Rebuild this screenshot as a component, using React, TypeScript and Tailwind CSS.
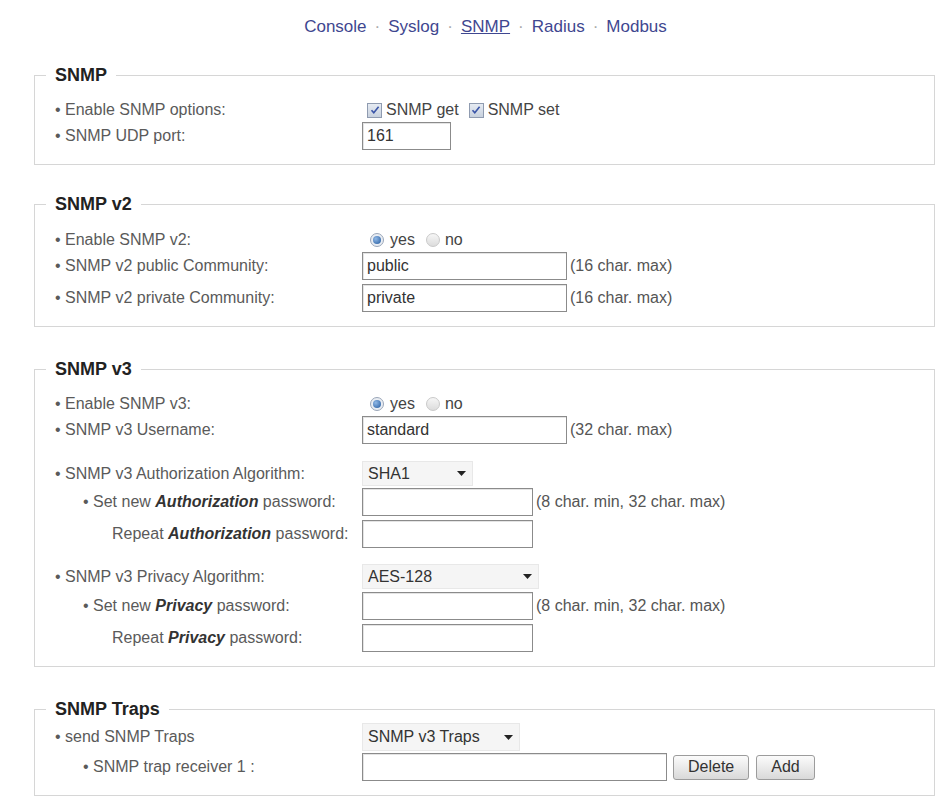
import React from "react";

const Bullet = ({ level = 1, children }: { level?: 1 | 2 | 3; children: React.ReactNode }) => {
  if (level === 3) return <span className="pl-[57px]">{children}</span>;
  return (
    <span className={level === 2 ? "pl-[28px]" : ""}>
      {"\u2022 "}
      {children}
    </span>
  );
};

const Row = ({
  label,
  children,
  className = "",
}: {
  label: React.ReactNode;
  children?: React.ReactNode;
  className?: string;
}) => (
  <div className={`grid grid-cols-[307px_1fr] items-center ${className}`}>
    <div className="whitespace-nowrap text-[16px] text-[#5a5a5a]">{label}</div>
    <div className="flex items-center">{children}</div>
  </div>
);

const Box = ({
  title,
  className = "",
  children,
}: {
  title: string;
  className?: string;
  children: React.ReactNode;
}) => (
  <fieldset className={`ml-[34px] mr-[2px] border border-[#d6d6d6] px-[20px] pb-[14px] ${className}`}>
    <legend className="ml-[-9px] px-[9px] text-[18px] font-bold leading-[24px] text-[#222]">{title}</legend>
    {children}
  </fieldset>
);

const TextInput = ({ value = "", width }: { value?: string; width: string }) => (
  <input
    readOnly
    defaultValue={value}
    className={`h-[28px] ${width} border border-[#8b8b8b] bg-white pl-[4px] text-[16px] text-[#333] shadow-[inset_1px_1px_0_#e4e4e4] outline-none`}
  />
);

const Hint = ({ children }: { children: React.ReactNode }) => (
  <span className="ml-[3px] whitespace-nowrap text-[16px] text-[#555]">{children}</span>
);

const Select = ({ value, width, height = "h-[25px]" }: { value: string; width: string; height?: string }) => (
  <div
    className={`flex ${height} ${width} items-center justify-between border border-[#e8e8e8] bg-[#f5f5f5] pl-[5px] pr-[6px] text-[16px] text-[#333]`}
  >
    <span>{value}</span>
    <svg width="9" height="5" viewBox="0 0 9 5">
      <path d="M0 0h9L4.5 5z" fill="#222" />
    </svg>
  </div>
);

const Check = () => (
  <span className="flex h-[15px] w-[15px] items-center justify-center border border-[#8f9bb0] bg-linear-to-b from-[#e6ebf2] to-[#c8d1de]">
    <svg width="10" height="10" viewBox="0 0 10 10">
      <path d="M1.5 5.2l2.3 2.6L8.6 1.8" fill="none" stroke="#3a55a8" strokeWidth="1.6" />
    </svg>
  </span>
);

const Radio = ({ on }: { on?: boolean }) =>
  on ? (
    <span className="flex h-[14px] w-[14px] items-center justify-center rounded-full border border-[#9aa6b8] bg-[#e9edf3]">
      <span className="h-[8px] w-[8px] rounded-full bg-radial-[at_35%_35%] from-[#8fb8e6] to-[#245a9e]" />
    </span>
  ) : (
    <span className="block h-[14px] w-[14px] rounded-full border border-[#c9c9c9] bg-linear-to-b from-[#f6f6f6] to-[#dcdcdc]" />
  );

const Button = ({ children }: { children: React.ReactNode }) => (
  <button className="h-[25px] rounded-[3px] border border-[#9c9c9c] bg-linear-to-b from-[#fbfbfb] to-[#d9d9d9] px-[14px] text-[16px] leading-[22px] text-[#333]">
    {children}
  </button>
);

const YesNo = () => (
  <div className="ml-[8px] flex items-center text-[16px] text-[#444]">
    <Radio on />
    <span className="ml-[6px]">yes</span>
    <span className="ml-[11px] block">
      <Radio />
    </span>
    <span className="ml-[5px]">no</span>
  </div>
);

const Dot = () => <span className="px-[8px] text-[#aaa]">·</span>;

export default function App() {
  return (
    <div className="min-h-[798px] bg-white font-['Liberation_Sans',Arial,sans-serif]">
      <nav className="ml-[34px] flex justify-center pt-[17px] text-[17px] leading-[20px] text-[#3f4790]">
        <span>Console</span>
        <Dot />
        <span>Syslog</span>
        <Dot />
        <span className="underline">SNMP</span>
        <Dot />
        <span>Radius</span>
        <Dot />
        <span>Modbus</span>
      </nav>

      <Box title="SNMP" className="mt-[26px] pt-[11px]">
        <Row label={<Bullet>Enable SNMP options:</Bullet>} className="h-[24px]">
          <div className="ml-[5px] flex items-center text-[16px] text-[#444]">
            <Check />
            <span className="ml-[4px]">SNMP get</span>
            <span className="ml-[10px] block">
              <Check />
            </span>
            <span className="ml-[4px]">SNMP set</span>
          </div>
        </Row>
        <Row label={<Bullet>SNMP UDP port:</Bullet>}>
          <TextInput value="161" width="w-[89px]" />
        </Row>
      </Box>

      <Box title="SNMP v2" className="mt-[27px] pt-[11px]">
        <Row label={<Bullet>Enable SNMP v2:</Bullet>} className="h-[25px]">
          <YesNo />
        </Row>
        <Row label={<Bullet>SNMP v2 public Community:</Bullet>}>
          <TextInput value="public" width="w-[205px]" />
          <Hint>(16 char. max)</Hint>
        </Row>
        <Row label={<Bullet>SNMP v2 private Community:</Bullet>} className="mt-[4px]">
          <TextInput value="private" width="w-[205px]" />
          <Hint>(16 char. max)</Hint>
        </Row>
      </Box>

      <Box title="SNMP v3" className="mt-[30px] pt-[11px] pb-[13px]">
        <Row label={<Bullet>Enable SNMP v3:</Bullet>} className="h-[20px]">
          <YesNo />
        </Row>
        <Row label={<Bullet>SNMP v3 Username:</Bullet>} className="mt-[4px]">
          <TextInput value="standard" width="w-[205px]" />
          <Hint>(32 char. max)</Hint>
        </Row>
        <Row label={<Bullet>SNMP v3 Authorization Algorithm:</Bullet>} className="mt-[17px]">
          <Select value="SHA1" width="w-[111px]" />
        </Row>
        <Row
          label={
            <Bullet level={2}>
              Set new <b className="italic text-[#333]">Authorization</b> password:
            </Bullet>
          }
          className="mt-[2px]"
        >
          <TextInput width="w-[171px]" />
          <Hint>(8 char. min, 32 char. max)</Hint>
        </Row>
        <Row
          label={
            <Bullet level={3}>
              Repeat <b className="italic text-[#333]">Authorization</b> password:
            </Bullet>
          }
          className="mt-[4px]"
        >
          <TextInput width="w-[171px]" />
        </Row>
        <Row label={<Bullet>SNMP v3 Privacy Algorithm:</Bullet>} className="mt-[16px]">
          <Select value="AES-128" width="w-[177px]" />
        </Row>
        <Row
          label={
            <Bullet level={2}>
              Set new <b className="italic text-[#333]">Privacy</b> password:
            </Bullet>
          }
          className="mt-[3px]"
        >
          <TextInput width="w-[171px]" />
          <Hint>(8 char. min, 32 char. max)</Hint>
        </Row>
        <Row
          label={
            <Bullet level={3}>
              Repeat <b className="italic text-[#333]">Privacy</b> password:
            </Bullet>
          }
          className="mt-[4px]"
        >
          <TextInput width="w-[171px]" />
        </Row>
      </Box>

      <Box title="SNMP Traps" className="mt-[30px]">
        <Row label={<Bullet>send SNMP Traps</Bullet>} className="mt-[2px]">
          <Select value="SNMP v3 Traps" width="w-[158px]" height="h-[28px]" />
        </Row>
        <Row label={<Bullet level={2}>SNMP trap receiver 1 :</Bullet>} className="mt-[2px]">
          <TextInput width="w-[305px]" />
          <div className="ml-[6px] flex gap-[7px]">
            <Button>Delete</Button>
            <Button>Add</Button>
          </div>
        </Row>
      </Box>
    </div>
  );
}
